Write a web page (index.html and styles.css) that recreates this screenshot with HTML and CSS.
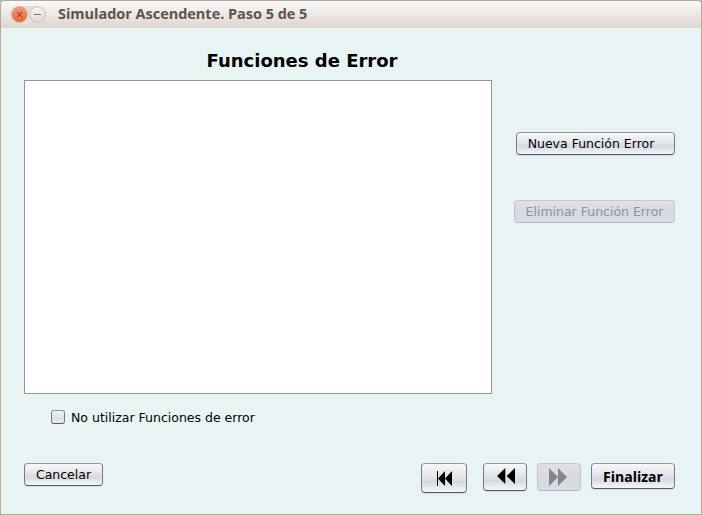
FILE: index.html
```html
<!DOCTYPE html>
<html lang="es">
<head>
<meta charset="utf-8">
<title>Simulador Ascendente. Paso 5 de 5</title>
<link rel="stylesheet" href="styles.css">
</head>
<body>
<div class="window">
  <header class="titlebar">
    <svg class="controls" width="38" height="22" viewBox="0 0 38 22">
      <defs>
        <linearGradient id="close" x1="0" y1="0" x2="0" y2="1"><stop offset="0" stop-color="#f59a78"/><stop offset="1" stop-color="#ea6233"/></linearGradient>
        <linearGradient id="mini" x1="0" y1="0" x2="0" y2="1"><stop offset="0" stop-color="#f8f6f4"/><stop offset="1" stop-color="#dfdad4"/></linearGradient>
      </defs>
      <rect x="1" y="2" width="36" height="18" rx="9" fill="#e3ded8"/>
      <circle cx="10.500" cy="10.500" r="7.700" fill="url(#close)" stroke="#cb9780" stroke-width=".9"/>
      <path d="M8 8l5 5M13 8l-5 5" stroke="#6b3825" stroke-width="1"/>
      <circle cx="28.500" cy="10.500" r="7.700" fill="url(#mini)" stroke="#c4bdb5" stroke-width=".9"/>
      <path d="M25 10.500h7" stroke="#77716a"/>
    </svg>
    <span class="caption">Simulador Ascendente. Paso 5 de 5</span>
  </header>
  <main class="content">
    <h1 class="heading">Funciones de Error</h1>
    <div class="middle">
      <div class="list"></div>
      <div class="actions">
        <button class="btn new"><span>Nueva Función Error</span></button>
        <button class="btn remove" disabled><span>Eliminar Función Error</span></button>
      </div>
    </div>
    <label class="option"><input class="check" type="checkbox"><span>No utilizar Funciones de error</span></label>
    <footer class="footer">
      <button class="btn cancel"><span>Cancelar</span></button>
      <button class="btn first" aria-label="Primero"><svg width="16" height="16" viewBox="0 0 16 16"><path d="M1 1h1v15H1zM9 1v15L2 8.500zM16 1v15L9 8.500z"/></svg></button>
      <button class="btn prev" aria-label="Anterior"><svg width="18" height="16" viewBox="0 0 18 16"><path d="M8.300 0v16L0 8zM18 0v16L9.700 8z"/></svg></button>
      <button class="btn next" aria-label="Siguiente" disabled><svg width="18" height="18" viewBox="0 0 18 18"><path d="M0 0v18L9 9zM9 0v18L18 9z"/></svg></button>
      <button class="btn finish"><span>Finalizar</span></button>
    </footer>
  </main>
</div>
</body>
</html>
```
FILE: styles.css
```css
* { box-sizing: border-box; }
body { margin: 0; background: #b9b9bb; font-family: "DejaVu Sans", sans-serif; font-size: 12.5px; color: #000; }
.window { width: 702px; height: 515px; border: 1px solid #b5a99e; border-radius: 5px 5px 0 0; background: #e8f4f4; overflow: hidden; }
.titlebar { height: 27px; display: flex; align-items: center; padding-left: 8px; background: linear-gradient(#faf9f8, #ddd6cf); }
.controls { flex: none; }
.caption { margin: -2px 0 0 11px; font: bold 14.5px/20px "Open Sans", sans-serif; letter-spacing: -.03px; color: #5b554d; white-space: nowrap; }
.content { padding: 20px 26px 0 23px; }
.heading { width: 468px; margin: 0 0 0 44px; height: 32px; font-size: 18px; line-height: 25px; text-align: center; }
.middle { display: flex; justify-content: space-between; height: 314px; }
.list { width: 468px; border: 1px solid #9297a1; background: #fff; }
.actions { display: flex; flex-direction: column; align-items: flex-end; gap: 45px; padding-top: 52px; }
.btn { display: flex; align-items: center; justify-content: center; padding: 0 0 1px; height: 23px; border: 1px solid; border-color: #9195a0 #777b84 #555962; border-radius: 4px; background: linear-gradient(#f8f8fa 0%, #e4e5ea 45%, #d6d9e2 65%, #f5f7fe 100%); box-shadow: 0 1px 0 #d2dfe0; font: inherit; color: #000; white-space: nowrap; }
.btn:disabled { color: #8f939b; border-color: #c5c8cf #c1c4cb #b4b8bf; background: linear-gradient(#dfe1e6, #d6d9e0 65%, #dadde5); box-shadow: none; }
.btn svg { fill: #000; }
.btn:disabled svg { fill: #858585; }
.new { width: 159px; padding-right: 9px; }
.remove { width: 161px; }
.option { display: flex; align-items: center; width: max-content; height: 16px; margin: 15px 0 0 27px; }
.check { appearance: none; width: 14px; height: 14px; margin: 0 6px 0 0; border: 1px solid; border-color: #9195a0 #777b84 #555962; border-radius: 3px; background: linear-gradient(#f3f3f6, #dcdee4 65%, #edf0f7); }
.footer { display: flex; align-items: flex-start; margin-top: 38px; }
.cancel { width: 79px; }
.first { width: 46px; height: 30px; margin-left: 318px; padding: 0 1px 0 0; }
.prev { width: 44px; height: 28px; margin-left: 16px; padding: 0 0 2px 2px; }
.next { width: 44px; height: 28px; margin-left: 10px; padding: 0 2px 0 0; }
.finish { width: 84px; height: 26px; margin-left: 10px; padding: 2px 0 0; font: bold 14px/20px "Open Sans", sans-serif; }
```
